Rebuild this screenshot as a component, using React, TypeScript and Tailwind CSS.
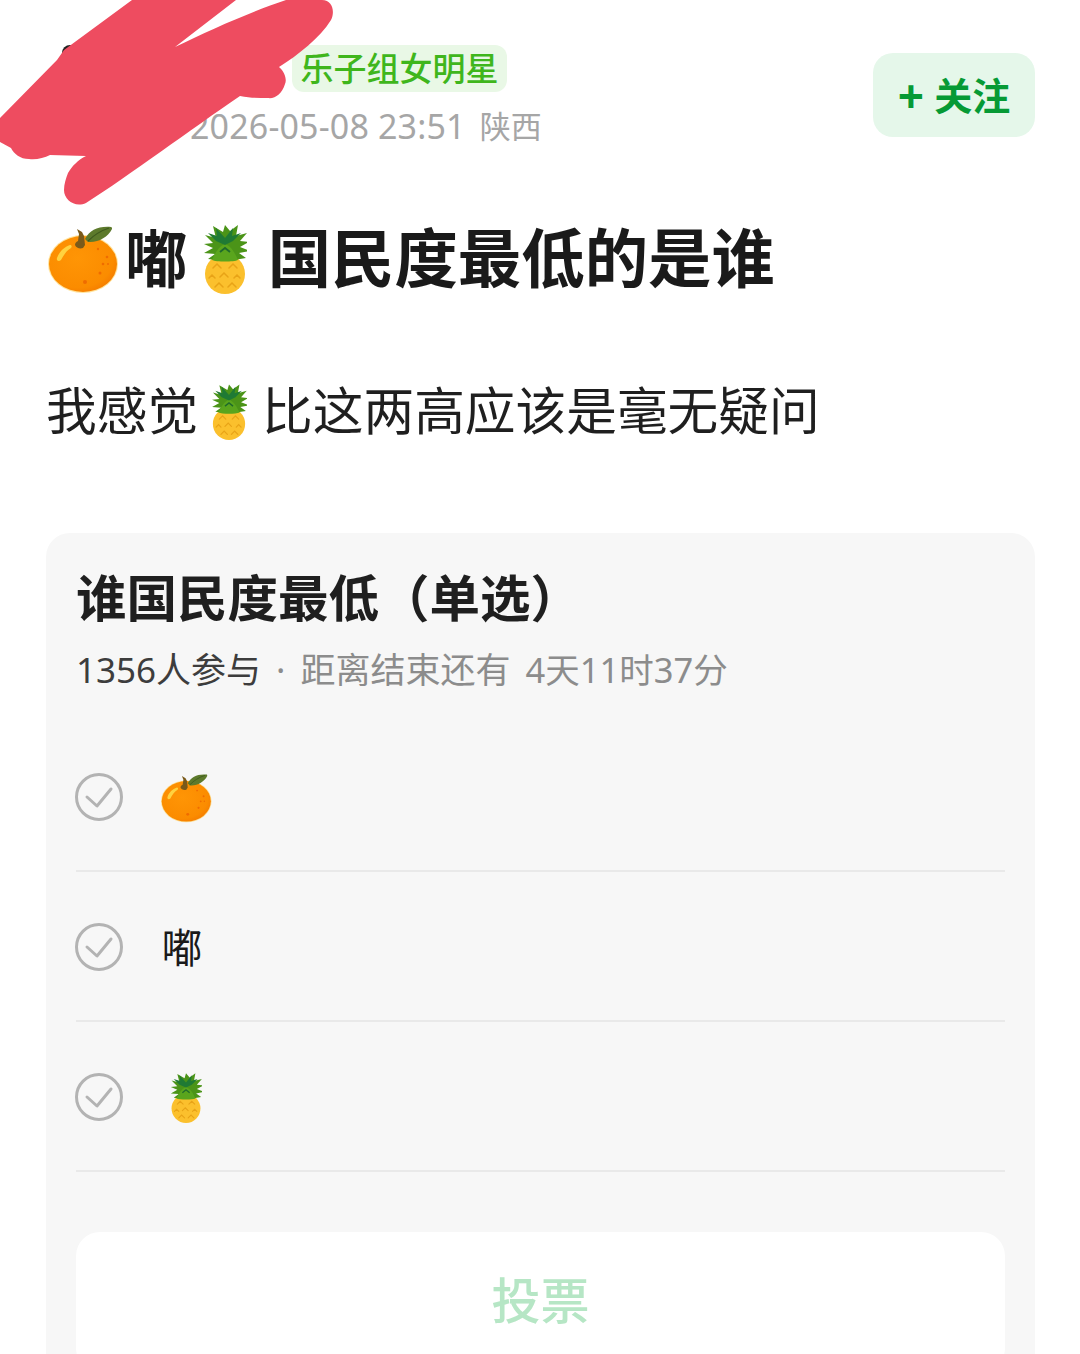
const font = { fontFamily: '"Noto Sans", "Noto Sans CJK SC", sans-serif' };

function Orange({ className }: { className: string }) {
  return (
    <svg viewBox="0 0 72 72" className={className}>
      <defs>
        <radialGradient id="org" cx="0.42" cy="0.4" r="0.65">
          <stop offset="0" stopColor="#ff9505" />
          <stop offset="0.8" stopColor="#fb8c00" />
          <stop offset="1" stopColor="#f57c00" />
        </radialGradient>
      </defs>
      <ellipse cx="35" cy="42" rx="35" ry="29" fill="#ffc93c" opacity="0.5" />
      <ellipse cx="35" cy="42" rx="34" ry="28" fill="url(#org)" />
      <path d="M9 36c2-6 7-11 13-13 2 0 2 2 1 3-5 3-7 7-10 12-2 2-5 1-4-2z" fill="#ffd23f" />
      <path d="M37 17c5-9 13-13 26-12 1 0 1 1 1 2-4 8-14 14-24 13z" fill="#5d7a2c" />
      <path d="M40 19c6-6 12-10 21-13" stroke="#3f5a1e" strokeWidth="1.2" fill="none" />
      <path d="M29 7l5 3 2 4 1 9-2 3c-3 1-7 0-8-3 0-2 1-3 3-4l1-7z" fill="#7a5a1a" />
      <g fill="#ef6c00">
        <circle cx="50" cy="27" r="1.2" /><circle cx="59" cy="35" r="1.3" />
        <circle cx="55" cy="42" r="1.3" /><circle cx="60" cy="42" r="1" />
        <circle cx="52" cy="51" r="1.5" /><circle cx="37" cy="60" r="2" />
      </g>
    </svg>
  );
}

function Pineapple({ className }: { className: string }) {
  return (
    <svg viewBox="2 0 44 72" className={className}>
      <ellipse cx="24" cy="52" rx="20" ry="20" fill="#fbc02d" />
      <g fill="none" stroke="#e8a317" strokeWidth="1.5" strokeLinecap="round">
        <path d="M12 46l4-4 4 4" /><path d="M28 46l4-4 4 4" />
        <path d="M19 55l4-4 4 4" /><path d="M8 56l3-3 3 3" /><path d="M33 56l3-3 3 3" />
        <path d="M14 65l4-4 4 4" /><path d="M27 65l4-4 4 4" />
      </g>
      <path d="M7 37l7-5-11-1 9-5-9-4 9-1-8-8 11 3-3-12 10 6 2-7 5 6 8-6-2 11 11-3-7 8 9 1-9 5 10 4-11 2 7 5-12 2H16z" fill="#4b9418" />
      <path d="M11 38c3-7 7-14 13-16 6 2 10 9 13 16-4 2-22 2-26 0z" fill="#5aa51d" />
      <path d="M15 6l9 10 8-10-1 8 9-3-8 8-8 4-9-4-8-8 9 3z" fill="#1f7a34" />
      <path d="M19 30l5-4 5 4" fill="none" stroke="#1f6a2c" strokeWidth="1.8" />
    </svg>
  );
}

function CheckCircle() {
  return (
    <svg viewBox="0 0 48 48" className="-ml-[1px] h-12 w-12 shrink-0" fill="none" stroke="#b3b3b3" strokeWidth="3" strokeLinecap="round" strokeLinejoin="round">
      <circle cx="24" cy="24" r="22.5" />
      <path d="M12 24l10 9 14-17" />
    </svg>
  );
}

function Row({ children }: { children: React.ReactNode }) {
  return (
    <div className="flex h-[150px] items-center gap-[38px] border-b-2 border-[#e9e9e9] pt-[2px]">
      <CheckCircle />
      <div className="flex w-[52px] justify-center">{children}</div>
    </div>
  );
}

export default function App() {
  return (
    <div className="relative h-[1354px] w-[1080px] overflow-hidden bg-white pl-[46px] pr-[45px]" style={font}>
      <span className="absolute left-[62px] top-[45px] h-[16px] w-[20px] rounded-full bg-[#222222]" />
      <svg viewBox="0 0 340 210" className="absolute left-0 top-0 h-[210px] w-[340px]">
        <path d="M0 118L57 60L64 50L132 0H236L175 47C210 30 250 12 286 0H322C333 0 335 12 331 20C320 38 298 55 279 67C285 72 287 80 285 84C282 94 275 99 268 98C258 98 250 98 240 96C190 130 130 175 86 203C75 208 64 200 64 190C64 184 66 178 68 173C72 166 78 160 86 156L50 155C44 158 36 160 29 159C20 159 14 154 11 148L0 142Z" fill="#ee4c60" />
      </svg>

      <header className="flex h-[221px] items-start justify-between">
        <div className="flex flex-col items-start pl-[144px] pt-[45px]">
          <span className="ml-[102px] flex h-[47px] w-[215px] items-center justify-center rounded-[12px] bg-[#e9f8e6] text-[33px] font-medium leading-none text-[#3fb61c]">
            乐子组女明星
          </span>
          <div className="mt-[14px] flex gap-[14px] text-[34px] leading-[40px] tracking-[0.15px] text-[#a6a6a6]">
            <span>2026-05-08 23:51</span>
            <span className="text-[31px]">陕西</span>
          </div>
        </div>
        <button className="mt-[53px] flex h-[84px] w-[162px] items-center justify-center gap-[10px] rounded-[20px] bg-[#e5f7ea] text-[38px] font-bold leading-none text-[#069a35]">
          <span className="text-[46px] leading-none">+</span>
          <span>关注</span>
        </button>
      </header>

      <h1 className="flex h-[74px] items-center text-[62.7px] font-bold leading-none text-[#1a1a1a]">
        <Orange className="ml-[2px] h-[72px] w-[72px] shrink-0" />
        <span className="ml-[5px]">嘟</span>
        <Pineapple className="ml-[15px] h-[72px] w-[44px] shrink-0" />
        <span className="ml-[21px] text-[63.4px]">国民度最低的是谁</span>
      </h1>

      <p className="mt-[86px] flex h-[60px] items-center text-[50.7px] leading-none text-[#1f1f1f]">
        <span>我感觉</span>
        <Pineapple className="ml-[13px] h-[58px] w-[36px] shrink-0" />
        <span className="ml-[15px]">比这两高应该是毫无疑问</span>
      </p>

      <section className="mt-[92px] h-[900px] rounded-[24px] bg-[#f7f7f7] px-[30px] pt-[35px]">
        <h2 className="text-[50.5px] font-bold leading-[60px] text-[#1f1f1f]">谁国民度最低（单选）</h2>
        <div className="mt-[20px] flex items-center text-[35px] leading-[44px] text-[#8c8c8c]">
          <span className="text-[#3d3d3d]">1356人参与</span>
          <span className="mx-[15px]">·</span>
          <span>距离结束还有</span>
          <span className="ml-[15px] text-[34.5px]">4天11时37分</span>
        </div>

        <div className="mt-[30px] flex flex-col">
          <Row><Orange className="h-[52px] w-[52px]" /></Row>
          <Row><span className="mr-[10px] text-[41px] leading-none text-[#1a1a1a]">嘟</span></Row>
          <Row><Pineapple className="mr-[2px] h-[52px] w-[32px]" /></Row>
        </div>

        <button className="mt-[60px] flex h-[140px] w-full items-start justify-center rounded-[24px] bg-white pt-[38px] text-[49px] font-medium leading-[60px] text-[#b6e6c5]">
          投票
        </button>
      </section>
    </div>
  );
}
